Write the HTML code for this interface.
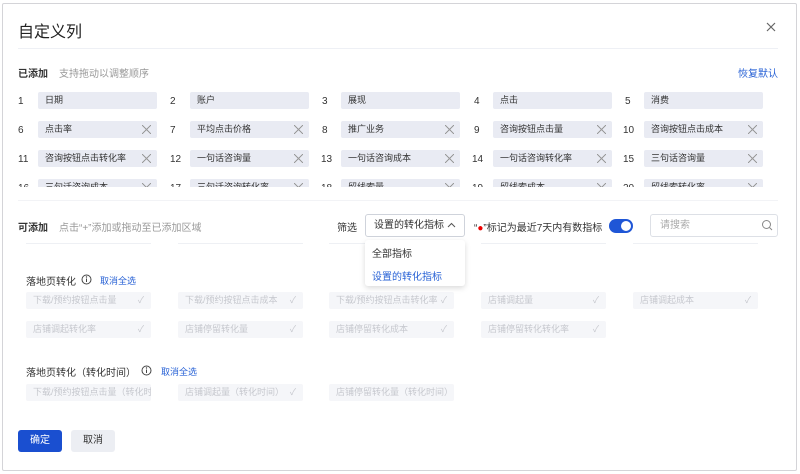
<!DOCTYPE html>
<html><head><meta charset="utf-8"><style>
*{margin:0;padding:0;box-sizing:border-box}
body{width:800px;height:474px;background:#fff;font-family:"Liberation Sans","Noto Sans CJK SC",sans-serif;position:relative;overflow:hidden;color:#333}
.abs{position:absolute}
.modal{position:absolute;left:2px;top:3px;width:795px;height:468px;border:1px solid #d4d4d8;border-radius:2px;background:#fff}
.t{position:absolute;white-space:nowrap}
.box{position:absolute;width:119px;height:17px;background:#e9ebf3;border-radius:2px;font-size:9px;line-height:17px;padding-left:7px;color:#333}
.num{position:absolute;font-size:10px;color:#333}
.x{position:absolute;right:6px;top:4px;width:9px;height:9px;background:
linear-gradient(45deg,transparent 46%,#9a9a9a 46%,#9a9a9a 54%,transparent 54%),
linear-gradient(-45deg,transparent 46%,#9a9a9a 46%,#9a9a9a 54%,transparent 54%)}
.fb{position:absolute;width:125px;height:17px;background:#f5f6f9;border-radius:2px;font-size:9px;line-height:17px;padding-left:7px;color:#c6c8ce;overflow:hidden;white-space:nowrap}
.fb .ck{position:absolute;right:7px;top:0;color:#c6c8ce}
.clip{position:absolute;left:0;top:176px;width:800px;height:11px;overflow:hidden}
</style></head><body>
<div class="modal"></div>
<div class="t" style="left:18px;top:18px;font-size:16px;color:#222">自定义列</div>
<svg class="abs" style="left:766px;top:22px" width="10" height="10"><path d="M1 1L9 9M9 1L1 9" stroke="#666" stroke-width="1.2"/></svg>
<div class="abs" style="left:18px;top:48px;width:760px;height:1px;background:#eef0f5"></div>
<div class="t" style="left:18px;top:65px;font-size:10px;color:#333;font-weight:bold">已添加</div>
<div class="t" style="left:59px;top:65px;font-size:10px;color:#999">支持拖动以调整顺序</div>
<div class="t" style="left:738px;top:65px;font-size:10px;color:#2a63d6">恢复默认</div>

<div class="num" style="left:18px;top:96px">1</div><div class="box" style="left:38px;top:92px">日期</div>
<div class="num" style="left:170px;top:96px">2</div><div class="box" style="left:190px;top:92px">账户</div>
<div class="num" style="left:322px;top:96px">3</div><div class="box" style="left:341px;top:92px">展现</div>
<div class="num" style="left:474px;top:96px">4</div><div class="box" style="left:493px;top:92px">点击</div>
<div class="num" style="left:625px;top:96px">5</div><div class="box" style="left:644px;top:92px">消费</div>

<div class="num" style="left:18px;top:125px">6</div><div class="box" style="left:38px;top:121px">点击率<span class="x"></span></div>
<div class="num" style="left:170px;top:125px">7</div><div class="box" style="left:190px;top:121px">平均点击价格<span class="x"></span></div>
<div class="num" style="left:322px;top:125px">8</div><div class="box" style="left:341px;top:121px">推广业务<span class="x"></span></div>
<div class="num" style="left:474px;top:125px">9</div><div class="box" style="left:493px;top:121px">咨询按钮点击量<span class="x"></span></div>
<div class="num" style="left:623px;top:125px">10</div><div class="box" style="left:644px;top:121px">咨询按钮点击成本<span class="x"></span></div>

<div class="num" style="left:18px;top:154px">11</div><div class="box" style="left:38px;top:150px">咨询按钮点击转化率<span class="x"></span></div>
<div class="num" style="left:170px;top:154px">12</div><div class="box" style="left:190px;top:150px">一句话咨询量<span class="x"></span></div>
<div class="num" style="left:321px;top:154px">13</div><div class="box" style="left:341px;top:150px">一句话咨询成本<span class="x"></span></div>
<div class="num" style="left:472px;top:154px">14</div><div class="box" style="left:493px;top:150px">一句话咨询转化率<span class="x"></span></div>
<div class="num" style="left:623px;top:154px">15</div><div class="box" style="left:644px;top:150px">三句话咨询量<span class="x"></span></div>

<div class="clip">
<div class="num" style="left:18px;top:7px">16</div><div class="box" style="left:38px;top:3px">三句话咨询成本<span class="x"></span></div>
<div class="num" style="left:170px;top:7px">17</div><div class="box" style="left:190px;top:3px">三句话咨询转化率<span class="x"></span></div>
<div class="num" style="left:321px;top:7px">18</div><div class="box" style="left:341px;top:3px">留线索量<span class="x"></span></div>
<div class="num" style="left:472px;top:7px">19</div><div class="box" style="left:493px;top:3px">留线索成本<span class="x"></span></div>
<div class="num" style="left:623px;top:7px">20</div><div class="box" style="left:644px;top:3px">留线索转化率<span class="x"></span></div>
</div>
<div class="abs" style="left:18px;top:200px;width:760px;height:1px;background:#f2f3f6"></div>

<div class="t" style="left:18px;top:219px;font-size:10px;font-weight:bold">可添加</div>
<div class="t" style="left:59px;top:219px;font-size:10px;color:#999">点击“+”添加或拖动至已添加区域</div>
<div class="t" style="left:337px;top:219px;font-size:10px">筛选</div>
<div class="abs" style="left:365px;top:214px;width:100px;height:23px;border:1px solid #cfd3db;border-radius:3px;font-size:10px;line-height:21px;padding-left:8px">设置的转化指标</div>
<svg class="abs" style="left:447px;top:222px" width="9" height="6"><path d="M1 5L4.5 1.5L8 5" fill="none" stroke="#555" stroke-width="1"/></svg>
<div class="t" style="left:474px;top:219px;font-size:10px">“<span style="color:#e00">●</span>”标记为最近7天内有数指标</div>
<div class="abs" style="left:609px;top:219px;width:24px;height:14px;border-radius:7px;background:#1f56d6"><div class="abs" style="left:12px;top:2px;width:10px;height:10px;border-radius:50%;background:#fff"></div></div>
<div class="abs" style="left:650px;top:214px;width:128px;height:23px;border:1px solid #dde0e6;border-radius:3px;font-size:10px;line-height:21px;padding-left:9px;color:#aaa">请搜索</div>
<svg class="abs" style="left:761px;top:219px" width="12" height="12"><circle cx="5.5" cy="5.5" r="4" fill="none" stroke="#888" stroke-width="1"/><path d="M8.5 8.5L11 11" stroke="#888"/></svg>

<div class="abs" style="left:26px;top:243px;width:125px;height:1px;background:#eef0f4"></div>
<div class="abs" style="left:178px;top:243px;width:125px;height:1px;background:#eef0f4"></div>
<div class="abs" style="left:329px;top:243px;width:125px;height:1px;background:#eef0f4"></div>
<div class="abs" style="left:481px;top:243px;width:125px;height:1px;background:#eef0f4"></div>
<div class="abs" style="left:633px;top:243px;width:125px;height:1px;background:#eef0f4"></div>

<div class="t" style="left:26px;top:273px;font-size:10px">落地页转化</div>
<svg class="abs" style="left:81px;top:274px" width="11" height="11"><circle cx="5.5" cy="5.5" r="4.5" fill="none" stroke="#444"/><path d="M5.5 4.5V8" stroke="#444"/><circle cx="5.5" cy="3" r=".7" fill="#444"/></svg>
<div class="t" style="left:100px;top:274px;font-size:9px;color:#2a63d6">取消全选</div>

<div class="fb" style="left:26px;top:292px">下载/预约按钮点击量<span class="ck">✓</span></div>
<div class="fb" style="left:178px;top:292px">下载/预约按钮点击成本<span class="ck">✓</span></div>
<div class="fb" style="left:329px;top:292px">下载/预约按钮点击转化率<span class="ck">✓</span></div>
<div class="fb" style="left:481px;top:292px">店铺调起量<span class="ck">✓</span></div>
<div class="fb" style="left:633px;top:292px">店铺调起成本<span class="ck">✓</span></div>
<div class="fb" style="left:26px;top:321px">店铺调起转化率<span class="ck">✓</span></div>
<div class="fb" style="left:178px;top:321px">店铺停留转化量<span class="ck">✓</span></div>
<div class="fb" style="left:329px;top:321px">店铺停留转化成本<span class="ck">✓</span></div>
<div class="fb" style="left:481px;top:321px">店铺停留转化转化率<span class="ck">✓</span></div>

<div class="t" style="left:26px;top:364px;font-size:10px">落地页转化（转化时间）</div>
<svg class="abs" style="left:141px;top:365px" width="11" height="11"><circle cx="5.5" cy="5.5" r="4.5" fill="none" stroke="#444"/><path d="M5.5 4.5V8" stroke="#444"/><circle cx="5.5" cy="3" r=".7" fill="#444"/></svg>
<div class="t" style="left:161px;top:365px;font-size:9px;color:#2a63d6">取消全选</div>
<div class="fb" style="left:26px;top:384px">下载/预约按钮点击量（转化时间）</div>
<div class="fb" style="left:178px;top:384px">店铺调起量（转化时间）<span class="ck">✓</span></div>
<div class="fb" style="left:329px;top:384px">店铺停留转化量（转化时间）</div>

<div class="abs" style="left:365px;top:240px;width:100px;height:46px;background:#fff;border-radius:3px;box-shadow:0 2px 6px rgba(0,0,0,.15)">
<div class="t" style="left:7px;top:5px;font-size:10px;color:#333">全部指标</div>
<div class="t" style="left:7px;top:28px;font-size:10px;color:#2a63d6">设置的转化指标</div>
</div>

<div class="abs" style="left:18px;top:430px;width:44px;height:22px;background:#1a4fd0;border-radius:3px;color:#fff;font-size:10px;line-height:22px;text-align:center">确定</div>
<div class="abs" style="left:71px;top:430px;width:44px;height:22px;background:#eceef3;border-radius:3px;color:#333;font-size:10px;line-height:22px;text-align:center">取消</div>
</body></html>
